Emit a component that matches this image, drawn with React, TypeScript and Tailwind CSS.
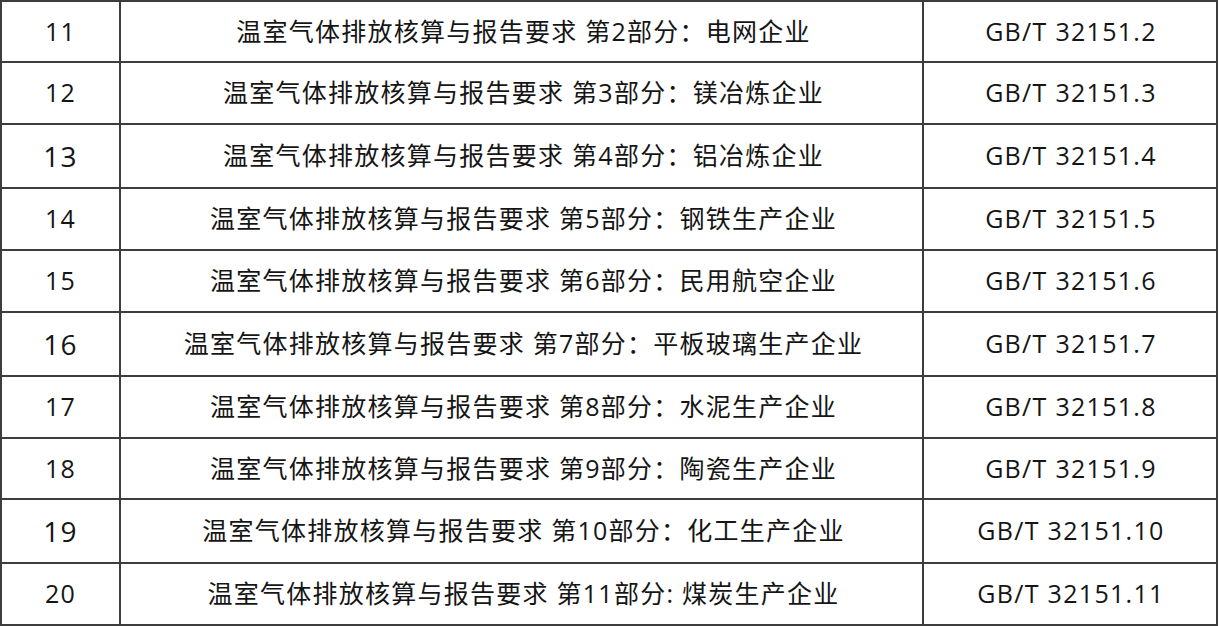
import React from "react";

const rows: { n: string; big?: boolean; title: string; code: string; h: string }[] = [
  { n: "11", title: "温室气体排放核算与报告要求 第2部分：电网企业", code: "GB/T 32151.2", h: "h-[61px]" },
  { n: "12", title: "温室气体排放核算与报告要求 第3部分：镁冶炼企业", code: "GB/T 32151.3", h: "h-[62px]" },
  { n: "13", big: true, title: "温室气体排放核算与报告要求 第4部分：铝冶炼企业", code: "GB/T 32151.4", h: "h-[64px]" },
  { n: "14", title: "温室气体排放核算与报告要求 第5部分：钢铁生产企业", code: "GB/T 32151.5", h: "h-[62px]" },
  { n: "15", title: "温室气体排放核算与报告要求 第6部分：民用航空企业", code: "GB/T 32151.6", h: "h-[62px]" },
  { n: "16", big: true, title: "温室气体排放核算与报告要求 第7部分：平板玻璃生产企业", code: "GB/T 32151.7", h: "h-[64px]" },
  { n: "17", title: "温室气体排放核算与报告要求 第8部分：水泥生产企业", code: "GB/T 32151.8", h: "h-[62px]" },
  { n: "18", title: "温室气体排放核算与报告要求 第9部分：陶瓷生产企业", code: "GB/T 32151.9", h: "h-[61px]" },
  { n: "19", big: true, title: "温室气体排放核算与报告要求 第10部分：化工生产企业", code: "GB/T 32151.10", h: "h-[64px]" },
  { n: "20", title: "温室气体排放核算与报告要求 第11部分: 煤炭生产企业", code: "GB/T 32151.11", h: "h-[62px]" },
];

export default function App() {
  return (
    <div
      className="w-[1219px] h-[626px] bg-white text-[#151515] overflow-hidden"
      style={{ fontFamily: '"Open Sans", "Noto Sans CJK SC", sans-serif' }}
    >
      <div className="w-[1218px] border-t-2 border-l-2 border-r-2 border-[#3d3d3d]">
        {rows.map((r) => (
          <div key={r.n} className={`flex border-b-2 border-[#3d3d3d] ${r.h}`}>
            <div
              className={`w-[119px] shrink-0 flex items-center justify-center border-r-2 border-[#3d3d3d] ${
                r.big ? "text-[28px]" : "text-[25px]"
              } tracking-[1.25px]`}
            >
              {r.n}
            </div>
            <div className="w-[803px] shrink-0 flex items-center justify-center pl-[4px] border-r-2 border-[#3d3d3d] text-[25px] tracking-[1.25px] whitespace-nowrap">
              {r.title}
            </div>
            <div className="flex-1 flex items-center justify-center pl-[2px] text-[25px] tracking-[1.3px] whitespace-nowrap">
              {r.code}
            </div>
          </div>
        ))}
      </div>
    </div>
  );
}
